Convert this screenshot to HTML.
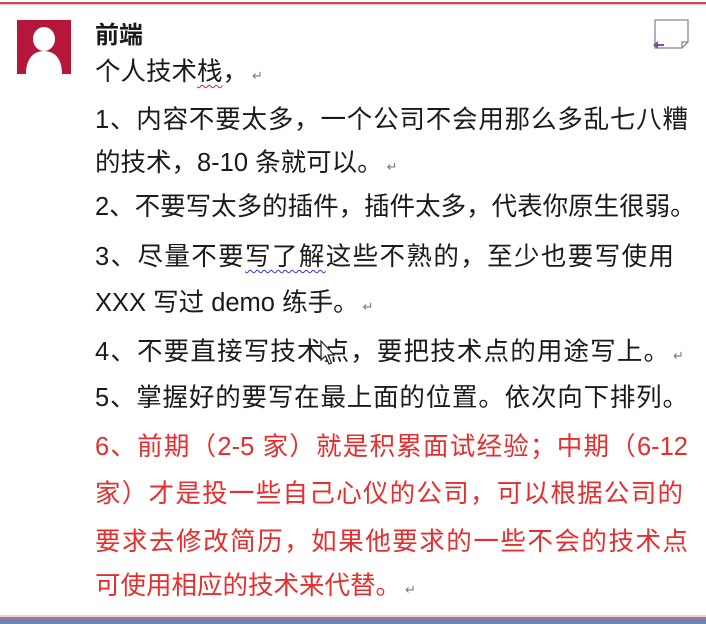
<!DOCTYPE html>
<html><head><meta charset="utf-8"><style>
html,body{margin:0;padding:0;background:#fff;width:706px;height:624px;overflow:hidden;position:relative;font-family:"Liberation Sans","Noto Sans CJK SC",sans-serif;}
.l{position:absolute;left:95px;height:32px;line-height:32px;font-size:25.5px;color:#1a1a1a;white-space:nowrap;}
.j{text-align:justify;text-align-last:justify;}
.r{color:#e62e2e;}
.p{font-size:13px;color:#777;margin-left:4px;}
.wr{text-decoration:underline wavy #e02020;text-decoration-thickness:1px;text-underline-offset:4px;}
.wb{text-decoration:underline wavy #2a3ad8;text-decoration-thickness:1px;text-underline-offset:4px;}
</style></head><body>
<div style="position:absolute;left:0;top:2px;width:706px;height:2px;background:#c84a5e"></div>
<div style="position:absolute;left:0;top:4px;width:706px;height:1px;background:#f0c0c8"></div>
<svg style="position:absolute;left:17px;top:20px" width="54" height="54" viewBox="0 0 54 54">
<rect width="54" height="54" fill="#b5163a"/>
<ellipse cx="27" cy="19" rx="11" ry="12" fill="#fff"/>
<path d="M9 54 C9 38 17 31 27 31 C37 31 45 38 45 54 Z" fill="#fff"/>
</svg>
<svg style="position:absolute;left:651px;top:18px" width="40" height="34" viewBox="0 0 40 34">
<path d="M4 2 H37 V24 L31 30 H4 Z" fill="#fff" stroke="#888" stroke-width="1.3"/>
<path d="M31 30 V24 H37" fill="none" stroke="#888" stroke-width="1.3"/>
<path d="M2 27 L7 23 V26 H13 V28 H7 V31 Z" fill="#7a4fa8"/>
</svg>
<div class="l" style="top:20px;font-weight:bold;font-size:24px">前端</div>
<div class="l" style="top:56px">个人技术<span class="wr">栈</span>，<span class="p">↵</span></div>
<div class="l j" style="top:104px;width:593px">1、内容不要太多，一个公司不会用那么多乱七八糟</div>
<div class="l" style="top:147px">的技术，8-10 条就可以。<span class="p">↵</span></div>
<div class="l j" style="top:191px;width:593px">2、不要写太多的插件，插件太多，代表你原生很弱。</div>
<div class="l j" style="top:241px;width:579px">3、尽量不要<span class="wb">写了解</span>这些不熟的，至少也要写使用</div>
<div class="l" style="top:287px">XXX 写过 demo 练手。<span class="p">↵</span></div>
<div class="l" style="top:336px;width:595px"><span style="display:inline-block;width:574px;text-align:justify;text-align-last:justify">4、不要直接写技术点，要把技术点的用途写上。</span><span class="p">↵</span></div>
<svg style="position:absolute;left:320px;top:340px" width="16" height="26" viewBox="0 0 16 26"><path d="M1 1 V20 L5.5 16 L9 24 L11.5 23 L8 15 H14 Z" fill="#fff" stroke="#222" stroke-width="1.2"/></svg>
<div class="l j" style="top:382px;width:593px">5、掌握好的要写在最上面的位置。依次向下排列。</div>
<div class="l j r" style="top:431px;width:593px">6、前期（2-5 家）就是积累面试经验；中期（6-12</div>
<div class="l j r" style="top:478px;width:588px">家）才是投一些自己心仪的公司，可以根据公司的</div>
<div class="l j r" style="top:526px;width:593px">要求去修改简历，如果他要求的一些不会的技术点</div>
<div class="l r" style="top:570px">可使用相应的技术来代替。<span class="p">↵</span></div>
<div style="position:absolute;left:0;top:615px;width:706px;height:2px;background:#f2d0d8"></div>
<div style="position:absolute;left:0;top:617px;width:706px;height:2px;background:#a07890"></div>
<div style="position:absolute;left:0;top:619px;width:706px;height:5px;background:#6a86b8"></div>
</body></html>
